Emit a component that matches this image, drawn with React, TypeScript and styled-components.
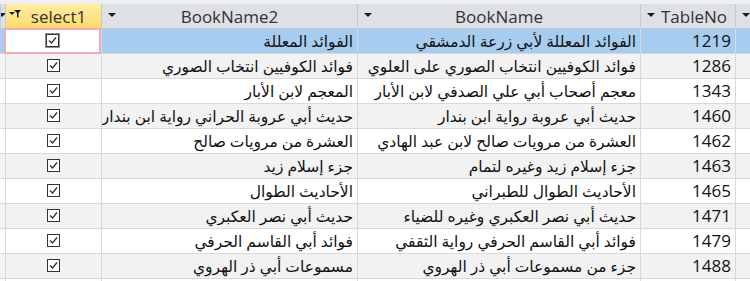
import React from 'react';
import styled, { createGlobalStyle, css } from 'styled-components';

const GlobalStyle = createGlobalStyle`
  html, body {
    margin: 0;
    padding: 0;
    background: #ffffff;
    overflow: hidden;
  }
`;

interface Book {
  tableNo: number;
  bookName: string;
  bookName2: string;
}

const books: Book[] = [
  { tableNo: 1219, bookName: 'الفوائد المعللة لأبي زرعة الدمشقي', bookName2: 'الفوائد المعللة' },
  { tableNo: 1286, bookName: 'فوائد الكوفيين انتخاب الصوري على العلوي', bookName2: 'فوائد الكوفيين انتخاب الصوري' },
  { tableNo: 1343, bookName: 'معجم أصحاب أبي علي الصدفي لابن الأبار', bookName2: 'المعجم لابن الأبار' },
  { tableNo: 1460, bookName: 'حديث أبي عروبة رواية ابن بندار', bookName2: 'حديث أبي عروبة الحراني رواية ابن بندار' },
  { tableNo: 1462, bookName: 'العشرة من مرويات صالح لابن عبد الهادي', bookName2: 'العشرة من مرويات صالح' },
  { tableNo: 1463, bookName: 'جزء إسلام زيد وغيره لتمام', bookName2: 'جزء إسلام زيد' },
  { tableNo: 1465, bookName: 'الأحاديث الطوال للطبراني', bookName2: 'الأحاديث الطوال' },
  { tableNo: 1471, bookName: 'حديث أبي نصر العكبري وغيره للضياء', bookName2: 'حديث أبي نصر العكبري' },
  { tableNo: 1479, bookName: 'فوائد أبي القاسم الحرفي رواية الثقفي', bookName2: 'فوائد أبي القاسم الحرفي' },
  { tableNo: 1488, bookName: 'جزء من مسموعات أبي ذر الهروي', bookName2: 'مسموعات أبي ذر الهروي' },
];

// column widths, right to left (each includes its own left grid line)
const COLUMNS = '15px 95px 283px 256px 96px 5px';
const GRID = '#d9d9d9';

const Sheet = styled.div`
  direction: rtl;
  width: 750px;
  height: 281px;
  overflow: hidden;
  font-family: 'Open Sans', 'DejaVu Sans', sans-serif;
  background: #ffffff;
`;

const TopStrip = styled.div`
  height: 4px;
  background: #f0f0f0;
`;

const Row = styled.div<{ $bg: string }>`
  display: grid;
  grid-template-columns: ${COLUMNS};
  height: 25px;
  box-sizing: border-box;
  border-bottom: 1px solid ${GRID};
  background: ${(p) => p.$bg};
`;

const HeaderRow = styled(Row)`
  border-bottom: 1px solid #c8cbd0;
`;

const HeaderCell = styled.div<{ $active?: boolean; $shift?: number }>`
  position: relative;
  display: flex;
  align-items: center;
  justify-content: center;
  box-sizing: border-box;
  border-left: 1px solid #c6c9ce;
  padding-left: ${(p) => p.$shift ?? 0}px;
  background: ${(p) => (p.$active ? 'linear-gradient(#ffeea4, #fdd96e)' : '#dde0e5')};
  color: #333333;
  font-size: 17px;
  overflow: hidden;
  white-space: nowrap;
`;

const Arrow = styled.span<{ $left?: number }>`
  position: absolute;
  left: ${(p) => p.$left ?? 6}px;
  top: 9px;
  width: 0;
  height: 0;
  border-left: 4px solid transparent;
  border-right: 4px solid transparent;
  border-top: 4px solid #1a1a1a;
`;

const FilterIcon = styled.svg`
  position: absolute;
  left: 3px;
  top: 6px;
`;

const Cell = styled.div<{ $align?: 'start' | 'center'; $selected?: boolean }>`
  display: flex;
  align-items: center;
  box-sizing: border-box;
  border-left: 1px solid ${GRID};
  padding: 0 4px 1px;
  font-size: 15.5px;
  color: #111111;
  overflow: hidden;
  white-space: nowrap;
  justify-content: ${(p) => (p.$align === 'center' ? 'center' : 'flex-start')};
  ${(p) =>
    p.$selected &&
    css`
      background: #ffffff;
      border: 2px solid #f4a9b1;
      margin: -1px 0 -1px -1px;
      height: 26px;
    `}
`;

const Number = styled.span`
  font-size: 17px;
  direction: ltr;
`;

const CheckBox: React.FC<{ focused?: boolean }> = ({ focused }) => (
  <svg width="15" height="15" viewBox="0 0 15 15">
    {focused && (
      <rect x="0.5" y="0.5" width="14" height="14" fill="none" stroke="#222" strokeDasharray="1 1" />
    )}
    <rect x="1.5" y="1.5" width="12" height="12" fill="#fff" stroke="#333" />
    <polyline points="4,7.5 6.5,10 11,4.5" fill="none" stroke="#333" strokeWidth="1.3" />
  </svg>
);

export default function App() {
  return (
    <>
      <GlobalStyle />
      <Sheet>
        <TopStrip />
        <HeaderRow $bg="#dde0e5">
          <HeaderCell>
            <Arrow />
          </HeaderCell>
          <HeaderCell $shift={12}>
            <Arrow />
            TableNo
          </HeaderCell>
          <HeaderCell>
            <Arrow />
            BookName
          </HeaderCell>
          <HeaderCell>
            <Arrow />
            BookName2
          </HeaderCell>
          <HeaderCell $active $shift={10}>
            <FilterIcon width="12" height="9" viewBox="0 0 12 9">
              <path d="M0 2 L6 2 L3 5 Z" fill="#1a1a1a" />
              <path d="M5 0 L12 0 L9.5 3 L9.5 8 L8 7 L8 3 Z" fill="#1a1a1a" />
            </FilterIcon>
            select1
          </HeaderCell>
          <HeaderCell>
            <Arrow $left={-3} />
          </HeaderCell>
        </HeaderRow>
        {books.map((b, i) => {
          const first = i === 0;
          const bg = first ? '#a6cdef' : i % 2 === 1 ? '#f2f2f2' : '#ffffff';
          return (
            <Row key={b.tableNo} $bg={bg}>
              <Cell />
              <Cell>
                <Number>{b.tableNo}</Number>
              </Cell>
              <Cell>{b.bookName}</Cell>
              <Cell>{b.bookName2}</Cell>
              <Cell $align="center" $selected={first}>
                <CheckBox focused={first} />
              </Cell>
              <Cell />
            </Row>
          );
        })}
        <Row $bg="#ffffff">
          <Cell />
          <Cell />
          <Cell />
          <Cell />
          <Cell />
          <Cell />
        </Row>
      </Sheet>
    </>
  );
}
